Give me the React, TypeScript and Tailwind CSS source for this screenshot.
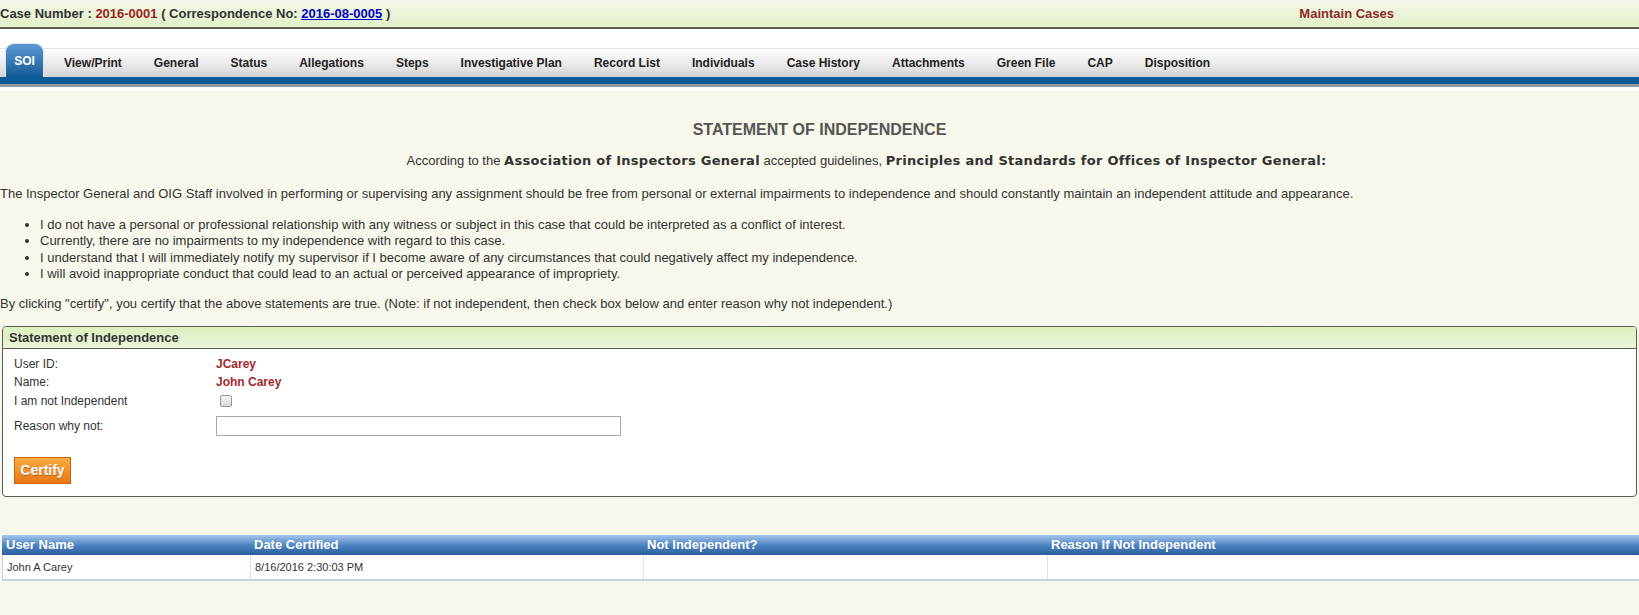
import { useState } from "react";

const tabs = [
  "View/Print",
  "General",
  "Status",
  "Allegations",
  "Steps",
  "Investigative Plan",
  "Record List",
  "Individuals",
  "Case History",
  "Attachments",
  "Green File",
  "CAP",
  "Disposition",
];

const bullets = [
  "I do not have a personal or professional relationship with any witness or subject in this case that could be interpreted as a conflict of interest.",
  "Currently, there are no impairments to my independence with regard to this case.",
  "I understand that I will immediately notify my supervisor if I become aware of any circumstances that could negatively affect my independence.",
  "I will avoid inappropriate conduct that could lead to an actual or perceived appearance of impropriety.",
];

const font = { fontFamily: "Tahoma, 'Liberation Sans', Arial, sans-serif" };
const wideBold = { fontFamily: "Tahoma, 'DejaVu Sans', sans-serif" };

export default function App() {
  const [notIndependent, setNotIndependent] = useState(false);
  const [reason, setReason] = useState("");

  return (
    <div className="min-h-[615px] bg-[#f7f7eb] text-[#333] text-[13px]" style={font}>
      {/* Case header */}
      <header className="h-[29px] bg-gradient-to-b from-[#f3f8e8] to-[#e1f0c6] border-b-2 border-[#5c5c50] flex items-center justify-between pr-[245px]">
        <div className="font-bold text-[13px] text-[#333] leading-none">
          Case Number : <span className="text-[#9b2323]">2016-0001</span> ( Correspondence No:{" "}
          <a href="#" className="text-[#0000cc] underline">2016-08-0005</a> )
        </div>
        <div className="font-bold text-[13px] text-[#8e2a2a]">Maintain Cases</div>
      </header>

      {/* Tabs */}
      <div className="bg-white pt-[19px]">
        <div className="relative h-[29px] border-t border-[#e3e3e3] bg-gradient-to-b from-[#fdfdfd] via-[#ececec] to-[#d2d2d2] flex items-end text-[12px] font-bold text-[#222]">
          <div className="ml-[5px] -mt-[5px] h-[34px] w-[39px] rounded-t-[9px] border border-b-0 border-[#dfe8f0] bg-gradient-to-b from-[#5d9ad3] to-[#0d5c98] text-white flex items-center justify-center self-end">
            SOI
          </div>
          <nav className="flex h-full items-center ml-[4px]">
            {tabs.map((t) => (
              <span key={t} className="px-4 whitespace-nowrap cursor-pointer">
                {t}
              </span>
            ))}
          </nav>
        </div>
        <div className="h-[7px] bg-[#0b5c97]" />
        <div className="h-[3px] bg-[#959ba2]" />
        <div className="h-[4px] bg-white" />
      </div>

      {/* Statement */}
      <div className="leading-[16.4px]">
        <h1 className="mt-[29px] h-[20px] leading-[20px] text-center font-bold text-[16px] text-[#555]">
          STATEMENT OF INDEPENDENCE
        </h1>
        <p className="mt-[13px] h-[16.4px] pl-[94px] text-center">
          According to the{" "}
          <b className="text-[13px] tracking-[0.28px]" style={wideBold}>
            Association of Inspectors General
          </b>{" "}
          accepted guidelines,{" "}
          <b className="text-[13px] tracking-[0.28px]" style={wideBold}>
            Principles and Standards for Offices of Inspector General:
          </b>
        </p>
        <p className="mt-[17px]">
          The Inspector General and OIG Staff involved in performing or supervising any assignment should be free from
          personal or external impairments to independence and should constantly maintain an independent attitude and
          appearance.
        </p>
        <ul className="mt-[14px] pl-10 list-disc">
          {bullets.map((b) => (
            <li key={b}>{b}</li>
          ))}
        </ul>
        <p className="mt-[14px]">
          By clicking "certify", you certify that the above statements are true. (Note: if not independent, then check
          box below and enter reason why not independent.)
        </p>
      </div>

      {/* Panel */}
      <section className="mt-[13px] ml-[2px] mr-[2px] border border-[#5c5c50] rounded-[4px] bg-white overflow-hidden">
        <div className="h-[22px] bg-gradient-to-b from-[#dcf0bf] to-[#e9f5d9] border-b border-[#5c5c50] px-[6px] flex items-center font-bold text-[13px] text-[#333]">
          Statement of Independence
        </div>
        <div className="pl-[11px] pt-[6px] pb-[12px] text-[12px]">
          <div className="grid grid-cols-[202px_1fr] items-center">
            <div className="h-[18px] flex items-center">User ID:</div>
            <div className="h-[18px] flex items-center font-bold text-[#a12a2a]">JCarey</div>
            <div className="h-[18px] flex items-center">Name:</div>
            <div className="h-[18px] flex items-center font-bold text-[#a12a2a]">John Carey</div>
            <div className="h-[20px] flex items-center">I am not Independent</div>
            <div className="h-[20px] flex items-center pl-[4px]">
              <button
                onClick={() => setNotIndependent(!notIndependent)}
                className="w-[12px] h-[12px] rounded-[2px] border border-[#9a9a9a] bg-gradient-to-b from-[#f4f4f4] to-[#d8d8d8] flex items-center justify-center text-[9px] leading-none"
              >
                {notIndependent ? "✓" : ""}
              </button>
            </div>
            <div className="mt-[5px] h-[20px] flex items-center">Reason why not:</div>
            <div className="mt-[5px]">
              <input
                value={reason}
                onChange={(e) => setReason(e.target.value)}
                className="w-[405px] h-[20px] border border-[#a9a9a9] bg-white outline-none px-1 text-[12px]"
              />
            </div>
          </div>
          <button className="mt-[21px] w-[57px] h-[27px] border border-[#c8640c] bg-gradient-to-b from-[#fbab45] to-[#e8770e] text-white font-bold text-[14px] [text-shadow:0_1px_0_#b25a08]">
            Certify
          </button>
        </div>
      </section>

      {/* Certification history */}
      <div className="mt-[38px] ml-[2px] text-[12px]">
        <div className="grid grid-cols-[248px_393px_404px_1fr] h-[20px] bg-gradient-to-b from-[#a6c6ec] via-[#4f85c2] to-[#2a5c9c] text-white font-bold text-[13px]">
          <div className="px-[4px] flex items-center">User Name</div>
          <div className="px-[4px] flex items-center">Date Certified</div>
          <div className="px-[4px] flex items-center">Not Independent?</div>
          <div className="px-[4px] flex items-center">Reason If Not Independent</div>
        </div>
        <div className="grid grid-cols-[248px_393px_404px_1fr] h-[26px] bg-white border-b-2 border-l border-[#c3d3df] text-[11px]">
          <div className="px-[4px] flex items-center border-r border-[#d6e2ec]">John A Carey</div>
          <div className="px-[4px] flex items-center border-r border-[#d6e2ec]">8/16/2016 2:30:03 PM</div>
          <div className="px-[4px] flex items-center border-r border-[#d6e2ec]"></div>
          <div className="px-[4px] flex items-center"></div>
        </div>
      </div>
    </div>
  );
}
